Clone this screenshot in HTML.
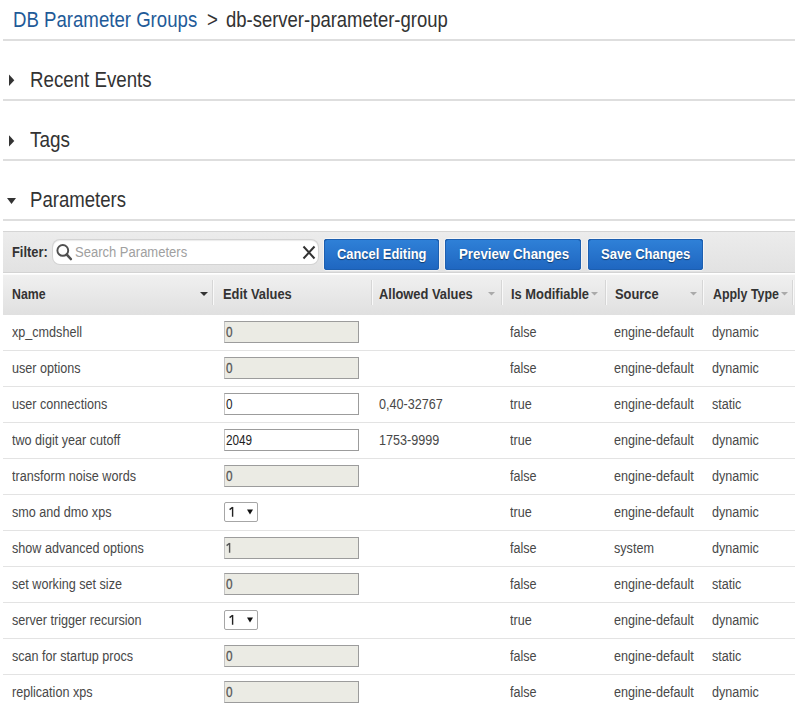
<!DOCTYPE html>
<html><head><meta charset="utf-8"><style>
body{margin:0;width:795px;height:709px;overflow:hidden;background:#fff;font-family:"Liberation Sans",sans-serif;position:relative}
.a{position:absolute}
.t{position:absolute;white-space:nowrap;transform-origin:0 0}
.hl{position:absolute;left:3px;width:792px;height:2px;background:#dedede}
.btn{position:absolute;top:239px;height:31px;border-radius:3px;background:linear-gradient(#2f81d8,#1f66c0);box-shadow:inset 0 0 0 1px #1d5fb0,inset 0 1px 0 #17508f,0 0 0 1px rgba(255,255,255,.55)}
.sep{position:absolute;top:280px;height:25px;width:1px;background:#d6d6d6;box-shadow:1px 0 0 #f9f9f9}
.inp{position:absolute;left:224px;width:133px;height:20px;border:1px solid #9c9c9c;border-left-color:#c4c4c4}
.rs{position:absolute;left:3px;width:792px;height:1px;background:#e3e3e3}
</style></head><body>
<div class="t" style="left:13px;top:10.25px;font-size:21.5px;line-height:21.5px;color:#1f5b98;font-weight:normal;transform:scaleX(0.866)">DB Parameter Groups</div>
<div class="t" style="left:207px;top:10.25px;font-size:21.5px;line-height:21.5px;color:#333;font-weight:normal;transform:scaleX(0.866)">&gt;</div>
<div class="t" style="left:226px;top:10.25px;font-size:21.5px;line-height:21.5px;color:#333;font-weight:normal;transform:scaleX(0.859)">db-server-parameter-group</div>
<div class="hl" style="top:39px"></div>
<div class="t" style="left:29.5px;top:70.25px;font-size:21.5px;line-height:21.5px;color:#333;font-weight:normal;transform:scaleX(0.87)">Recent Events</div>
<div class="hl" style="top:99px"></div>
<div class="t" style="left:30px;top:130.25px;font-size:21.5px;line-height:21.5px;color:#333;font-weight:normal;transform:scaleX(0.88)">Tags</div>
<div class="hl" style="top:159px"></div>
<div class="t" style="left:29.5px;top:190.25px;font-size:21.5px;line-height:21.5px;color:#333;font-weight:normal;transform:scaleX(0.864)">Parameters</div>
<div class="hl" style="top:219px"></div>
<svg class="a" style="left:0;top:0" width="40" height="220"><polygon points="9,74.5 14.3,80.2 9,86" fill="#333"/><polygon points="9,135.2 14.3,141 9,146.6" fill="#333"/><polygon points="7,198 16,198 11.5,204" fill="#333"/></svg>
<div class="a" style="left:3px;top:231px;width:792px;height:42px;background:linear-gradient(#ececec,#e2e2e2);border-top:1px solid #d5d5d5;border-bottom:1px solid #d3d3d3;box-sizing:border-box"></div>
<div class="t" style="left:12px;top:244.50px;font-size:14px;line-height:14px;color:#333;font-weight:bold;transform:scaleX(0.92)">Filter:</div>
<div class="a" style="left:52.5px;top:239.5px;width:265.5px;height:24px;border-radius:7px;background:#fff;box-shadow:0 0 0 1px #d3d3d3, inset 0 1px 1px rgba(0,0,0,.08)"></div>
<svg class="a" style="left:50px;top:238px" width="30" height="28"><circle cx="12.8" cy="12.4" r="5.4" fill="none" stroke="#505050" stroke-width="1.9"/><line x1="16.8" y1="16.6" x2="20.8" y2="21" stroke="#505050" stroke-width="2.6" stroke-linecap="round"/></svg>
<div class="t" style="left:74.5px;top:245.00px;font-size:14px;line-height:14px;color:#a0a0a0;font-weight:normal;transform:scaleX(0.93)">Search Parameters</div>
<svg class="a" style="left:300px;top:244px" width="18" height="18"><path d="M3.5 2.5 L14.5 14.5 M14.5 2.5 L3.5 14.5" stroke="#333" stroke-width="2"/></svg>
<div class="btn" style="left:324px;width:115px"></div>
<div class="t" style="left:336.5px;top:247.00px;font-size:14px;line-height:14px;color:#fff;text-shadow:0 1px 1px rgba(0,0,0,.45);font-weight:bold;transform:scaleX(0.92)">Cancel Editing</div>
<div class="btn" style="left:445px;width:136px"></div>
<div class="t" style="left:458.5px;top:247.00px;font-size:14px;line-height:14px;color:#fff;text-shadow:0 1px 1px rgba(0,0,0,.45);font-weight:bold;transform:scaleX(0.95)">Preview Changes</div>
<div class="btn" style="left:588px;width:115px"></div>
<div class="t" style="left:601.0px;top:247.00px;font-size:14px;line-height:14px;color:#fff;text-shadow:0 1px 1px rgba(0,0,0,.45);font-weight:bold;transform:scaleX(0.934)">Save Changes</div>
<div class="a" style="left:3px;top:274px;width:792px;height:41px;background:linear-gradient(#f0f0f0,#e0e0e0);border-top:1px solid #fafafa;box-sizing:border-box"></div>
<div class="t" style="left:11.5px;top:286.70px;font-size:14px;line-height:14px;color:#333;font-weight:bold;transform:scaleX(0.88)">Name</div>
<div class="t" style="left:222.5px;top:286.70px;font-size:14px;line-height:14px;color:#333;font-weight:bold;transform:scaleX(0.92)">Edit Values</div>
<div class="t" style="left:379px;top:286.70px;font-size:14px;line-height:14px;color:#333;font-weight:bold;transform:scaleX(0.92)">Allowed Values</div>
<div class="t" style="left:511px;top:286.70px;font-size:14px;line-height:14px;color:#333;font-weight:bold;transform:scaleX(0.92)">Is Modifiable</div>
<div class="t" style="left:614.5px;top:286.70px;font-size:14px;line-height:14px;color:#333;font-weight:bold;transform:scaleX(0.92)">Source</div>
<div class="t" style="left:712.5px;top:286.70px;font-size:14px;line-height:14px;color:#333;font-weight:bold;transform:scaleX(0.886)">Apply Type</div>
<div class="sep" style="left:212px"></div>
<div class="sep" style="left:371px"></div>
<div class="sep" style="left:501px"></div>
<div class="sep" style="left:605px"></div>
<div class="sep" style="left:702px"></div>
<div class="sep" style="left:792px"></div>
<svg class="a" style="left:0;top:285px" width="795" height="20"><polygon points="200,7 208,7 204,11" fill="#333"/><polygon points="488,7 495,7 491.5,10.5" fill="#aaa"/><polygon points="591,7 598,7 594.5,10.5" fill="#aaa"/><polygon points="690,7 697,7 693.5,10.5" fill="#aaa"/><polygon points="781,7 788,7 784.5,10.5" fill="#aaa"/></svg>
<div class="t" style="left:11.5px;top:325.20px;font-size:14px;line-height:14px;color:#484848;font-weight:normal;transform:scaleX(0.9)">xp_cmdshell</div>
<div class="inp" style="top:321px;background:#ebebe4"></div>
<div class="t" style="left:225.5px;top:325.20px;font-size:14px;line-height:14px;color:#555;-webkit-text-stroke:0.3px #555;font-weight:normal;transform:scaleX(0.84)">0</div>
<div class="t" style="left:510px;top:325.20px;font-size:14px;line-height:14px;color:#484848;font-weight:normal;transform:scaleX(0.9)">false</div>
<div class="t" style="left:614px;top:325.20px;font-size:14px;line-height:14px;color:#484848;font-weight:normal;transform:scaleX(0.9)">engine-default</div>
<div class="t" style="left:711.5px;top:325.20px;font-size:14px;line-height:14px;color:#484848;font-weight:normal;transform:scaleX(0.9)">dynamic</div>
<div class="rs" style="top:350px"></div>
<div class="t" style="left:11.5px;top:361.20px;font-size:14px;line-height:14px;color:#484848;font-weight:normal;transform:scaleX(0.9)">user options</div>
<div class="inp" style="top:357px;background:#ebebe4"></div>
<div class="t" style="left:225.5px;top:361.20px;font-size:14px;line-height:14px;color:#555;-webkit-text-stroke:0.3px #555;font-weight:normal;transform:scaleX(0.84)">0</div>
<div class="t" style="left:510px;top:361.20px;font-size:14px;line-height:14px;color:#484848;font-weight:normal;transform:scaleX(0.9)">false</div>
<div class="t" style="left:614px;top:361.20px;font-size:14px;line-height:14px;color:#484848;font-weight:normal;transform:scaleX(0.9)">engine-default</div>
<div class="t" style="left:711.5px;top:361.20px;font-size:14px;line-height:14px;color:#484848;font-weight:normal;transform:scaleX(0.9)">dynamic</div>
<div class="rs" style="top:386px"></div>
<div class="t" style="left:11.5px;top:397.20px;font-size:14px;line-height:14px;color:#484848;font-weight:normal;transform:scaleX(0.9)">user connections</div>
<div class="inp" style="top:393px;background:#fff"></div>
<div class="t" style="left:225.5px;top:397.20px;font-size:14px;line-height:14px;color:#1e1e1e;font-weight:normal;transform:scaleX(0.84)">0</div>
<div class="t" style="left:379px;top:397.20px;font-size:14px;line-height:14px;color:#484848;font-weight:normal;transform:scaleX(0.9)">0,40-32767</div>
<div class="t" style="left:510px;top:397.20px;font-size:14px;line-height:14px;color:#484848;font-weight:normal;transform:scaleX(0.9)">true</div>
<div class="t" style="left:614px;top:397.20px;font-size:14px;line-height:14px;color:#484848;font-weight:normal;transform:scaleX(0.9)">engine-default</div>
<div class="t" style="left:711.5px;top:397.20px;font-size:14px;line-height:14px;color:#484848;font-weight:normal;transform:scaleX(0.9)">static</div>
<div class="rs" style="top:422px"></div>
<div class="t" style="left:11.5px;top:433.20px;font-size:14px;line-height:14px;color:#484848;font-weight:normal;transform:scaleX(0.9)">two digit year cutoff</div>
<div class="inp" style="top:429px;background:#fff"></div>
<div class="t" style="left:225.5px;top:433.20px;font-size:14px;line-height:14px;color:#1e1e1e;font-weight:normal;transform:scaleX(0.84)">2049</div>
<div class="t" style="left:379px;top:433.20px;font-size:14px;line-height:14px;color:#484848;font-weight:normal;transform:scaleX(0.9)">1753-9999</div>
<div class="t" style="left:510px;top:433.20px;font-size:14px;line-height:14px;color:#484848;font-weight:normal;transform:scaleX(0.9)">true</div>
<div class="t" style="left:614px;top:433.20px;font-size:14px;line-height:14px;color:#484848;font-weight:normal;transform:scaleX(0.9)">engine-default</div>
<div class="t" style="left:711.5px;top:433.20px;font-size:14px;line-height:14px;color:#484848;font-weight:normal;transform:scaleX(0.9)">dynamic</div>
<div class="rs" style="top:458px"></div>
<div class="t" style="left:11.5px;top:469.20px;font-size:14px;line-height:14px;color:#484848;font-weight:normal;transform:scaleX(0.9)">transform noise words</div>
<div class="inp" style="top:465px;background:#ebebe4"></div>
<div class="t" style="left:225.5px;top:469.20px;font-size:14px;line-height:14px;color:#555;-webkit-text-stroke:0.3px #555;font-weight:normal;transform:scaleX(0.84)">0</div>
<div class="t" style="left:510px;top:469.20px;font-size:14px;line-height:14px;color:#484848;font-weight:normal;transform:scaleX(0.9)">false</div>
<div class="t" style="left:614px;top:469.20px;font-size:14px;line-height:14px;color:#484848;font-weight:normal;transform:scaleX(0.9)">engine-default</div>
<div class="t" style="left:711.5px;top:469.20px;font-size:14px;line-height:14px;color:#484848;font-weight:normal;transform:scaleX(0.9)">dynamic</div>
<div class="rs" style="top:494px"></div>
<div class="t" style="left:11.5px;top:505.20px;font-size:14px;line-height:14px;color:#484848;font-weight:normal;transform:scaleX(0.9)">smo and dmo xps</div>
<div class="a" style="left:224px;top:502px;width:32px;height:18px;border:1px solid #a6a6a6;border-radius:2px;background:#fff"></div>
<svg class="a" style="left:227.6px;top:506px" width="8" height="13"><path d="M4.6 1 V10.7 M4.6 1.2 L1.6 3.6" stroke="#222" stroke-width="1.4" fill="none"/></svg>
<svg class="a" style="left:246px;top:509px" width="8" height="6"><polygon points="1,0.5 7,0.5 4,5.5" fill="#111"/></svg>
<div class="t" style="left:510px;top:505.20px;font-size:14px;line-height:14px;color:#484848;font-weight:normal;transform:scaleX(0.9)">true</div>
<div class="t" style="left:614px;top:505.20px;font-size:14px;line-height:14px;color:#484848;font-weight:normal;transform:scaleX(0.9)">engine-default</div>
<div class="t" style="left:711.5px;top:505.20px;font-size:14px;line-height:14px;color:#484848;font-weight:normal;transform:scaleX(0.9)">dynamic</div>
<div class="rs" style="top:530px"></div>
<div class="t" style="left:11.5px;top:541.20px;font-size:14px;line-height:14px;color:#484848;font-weight:normal;transform:scaleX(0.9)">show advanced options</div>
<div class="inp" style="top:537px;background:#ebebe4"></div>
<svg class="a" style="left:224.8px;top:541.9px" width="8" height="13"><path d="M4.6 1 V10.7 M4.6 1.2 L1.6 3.6" stroke="#555" stroke-width="1.4" fill="none"/></svg>
<div class="t" style="left:510px;top:541.20px;font-size:14px;line-height:14px;color:#484848;font-weight:normal;transform:scaleX(0.9)">false</div>
<div class="t" style="left:614px;top:541.20px;font-size:14px;line-height:14px;color:#484848;font-weight:normal;transform:scaleX(0.9)">system</div>
<div class="t" style="left:711.5px;top:541.20px;font-size:14px;line-height:14px;color:#484848;font-weight:normal;transform:scaleX(0.9)">dynamic</div>
<div class="rs" style="top:566px"></div>
<div class="t" style="left:11.5px;top:577.20px;font-size:14px;line-height:14px;color:#484848;font-weight:normal;transform:scaleX(0.9)">set working set size</div>
<div class="inp" style="top:573px;background:#ebebe4"></div>
<div class="t" style="left:225.5px;top:577.20px;font-size:14px;line-height:14px;color:#555;-webkit-text-stroke:0.3px #555;font-weight:normal;transform:scaleX(0.84)">0</div>
<div class="t" style="left:510px;top:577.20px;font-size:14px;line-height:14px;color:#484848;font-weight:normal;transform:scaleX(0.9)">false</div>
<div class="t" style="left:614px;top:577.20px;font-size:14px;line-height:14px;color:#484848;font-weight:normal;transform:scaleX(0.9)">engine-default</div>
<div class="t" style="left:711.5px;top:577.20px;font-size:14px;line-height:14px;color:#484848;font-weight:normal;transform:scaleX(0.9)">static</div>
<div class="rs" style="top:602px"></div>
<div class="t" style="left:11.5px;top:613.20px;font-size:14px;line-height:14px;color:#484848;font-weight:normal;transform:scaleX(0.9)">server trigger recursion</div>
<div class="a" style="left:224px;top:610px;width:32px;height:18px;border:1px solid #a6a6a6;border-radius:2px;background:#fff"></div>
<svg class="a" style="left:227.6px;top:614px" width="8" height="13"><path d="M4.6 1 V10.7 M4.6 1.2 L1.6 3.6" stroke="#222" stroke-width="1.4" fill="none"/></svg>
<svg class="a" style="left:246px;top:617px" width="8" height="6"><polygon points="1,0.5 7,0.5 4,5.5" fill="#111"/></svg>
<div class="t" style="left:510px;top:613.20px;font-size:14px;line-height:14px;color:#484848;font-weight:normal;transform:scaleX(0.9)">true</div>
<div class="t" style="left:614px;top:613.20px;font-size:14px;line-height:14px;color:#484848;font-weight:normal;transform:scaleX(0.9)">engine-default</div>
<div class="t" style="left:711.5px;top:613.20px;font-size:14px;line-height:14px;color:#484848;font-weight:normal;transform:scaleX(0.9)">dynamic</div>
<div class="rs" style="top:638px"></div>
<div class="t" style="left:11.5px;top:649.20px;font-size:14px;line-height:14px;color:#484848;font-weight:normal;transform:scaleX(0.9)">scan for startup procs</div>
<div class="inp" style="top:645px;background:#ebebe4"></div>
<div class="t" style="left:225.5px;top:649.20px;font-size:14px;line-height:14px;color:#555;-webkit-text-stroke:0.3px #555;font-weight:normal;transform:scaleX(0.84)">0</div>
<div class="t" style="left:510px;top:649.20px;font-size:14px;line-height:14px;color:#484848;font-weight:normal;transform:scaleX(0.9)">false</div>
<div class="t" style="left:614px;top:649.20px;font-size:14px;line-height:14px;color:#484848;font-weight:normal;transform:scaleX(0.9)">engine-default</div>
<div class="t" style="left:711.5px;top:649.20px;font-size:14px;line-height:14px;color:#484848;font-weight:normal;transform:scaleX(0.9)">static</div>
<div class="rs" style="top:674px"></div>
<div class="t" style="left:11.5px;top:685.20px;font-size:14px;line-height:14px;color:#484848;font-weight:normal;transform:scaleX(0.9)">replication xps</div>
<div class="inp" style="top:681px;background:#ebebe4"></div>
<div class="t" style="left:225.5px;top:685.20px;font-size:14px;line-height:14px;color:#555;-webkit-text-stroke:0.3px #555;font-weight:normal;transform:scaleX(0.84)">0</div>
<div class="t" style="left:510px;top:685.20px;font-size:14px;line-height:14px;color:#484848;font-weight:normal;transform:scaleX(0.9)">false</div>
<div class="t" style="left:614px;top:685.20px;font-size:14px;line-height:14px;color:#484848;font-weight:normal;transform:scaleX(0.9)">engine-default</div>
<div class="t" style="left:711.5px;top:685.20px;font-size:14px;line-height:14px;color:#484848;font-weight:normal;transform:scaleX(0.9)">dynamic</div>
<div class="rs" style="top:710px"></div>
</body></html>
